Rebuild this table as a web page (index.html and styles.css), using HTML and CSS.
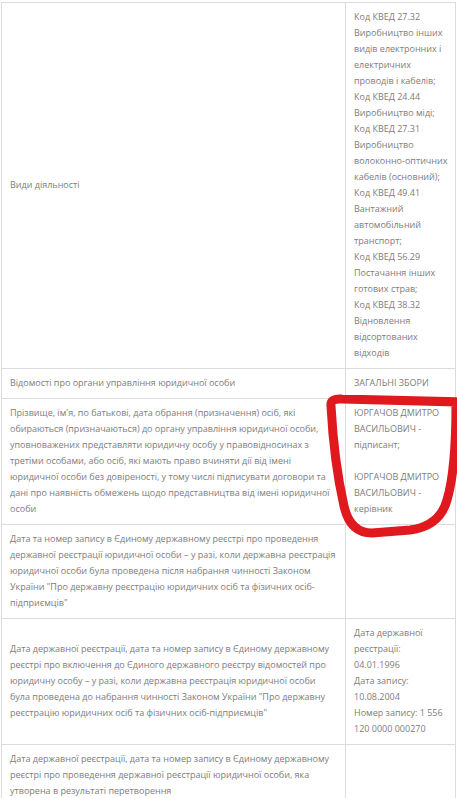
FILE: index.html
```html
<!DOCTYPE html>
<html lang="uk">
<head>
    <meta charset="UTF-8">
    <meta name="viewport" content="width=device-width, initial-scale=1.0">
    <title>Відомості про юридичну особу</title>
    <link rel="stylesheet" href="styles.css">
</head>
<body>
    <div class="page">
        <table class="info-table">
            <tr>
                <td class="label">Види діяльності</td>
                <td class="value">
                    Код КВЕД 27.32 Виробництво інших видів електронних і електричних проводів і кабелів;<br>
                    Код КВЕД 24.44 Виробництво міді;<br>
                    Код КВЕД 27.31 Виробництво волоконно-оптичних кабелів (основний);<br>
                    Код КВЕД 49.41 Вантажний автомобільний транспорт;<br>
                    Код КВЕД 56.29 Постачання інших готових страв;<br>
                    Код КВЕД 38.32 Відновлення відсортованих відходів
                </td>
            </tr>
            <tr>
                <td class="label">Відомості про органи управління юридичної особи</td>
                <td class="value">ЗАГАЛЬНІ ЗБОРИ</td>
            </tr>
            <tr>
                <td class="label">Прізвище, ім'я, по батькові, дата обрання (призначення) осіб, які обираються (призначаються) до органу управління юридичної особи, уповноважених представляти юридичну особу у правовідносинах з третіми особами, або осіб, які мають право вчиняти дії від імені юридичної особи без довіреності, у тому числі підписувати договори та дані про наявність обмежень щодо представництва від імені юридичної особи</td>
                <td class="value">
                    ЮРГАЧОВ ДМИТРО ВАСИЛЬОВИЧ - підписант;<br><br>
                    ЮРГАЧОВ ДМИТРО ВАСИЛЬОВИЧ - керівник
                </td>
            </tr>
            <tr>
                <td class="label">Дата та номер запису в Єдиному державному реєстрі про проведення державної реєстрації юридичної особи – у разі, коли державна реєстрація юридичної особи була проведена після набрання чинності Законом України "Про державну реєстрацію юридичних осіб та фізичних осіб-підприємців"</td>
                <td class="value"></td>
            </tr>
            <tr>
                <td class="label">Дата державної реєстрації, дата та номер запису в Єдиному державному реєстрі про включення до Єдиного державного реєстру відомостей про юридичну особу – у разі, коли державна реєстрація юридичної особи була проведена до набрання чинності Законом України "Про державну реєстрацію юридичних осіб та фізичних осіб-підприємців"</td>
                <td class="value">
                    Дата державної реєстрації:<br>04.01.1996<br>
                    Дата запису: 10.08.2004<br>
                    Номер запису: 1 556 120 0000 000270
                </td>
            </tr>
            <tr>
                <td class="label">Дата державної реєстрації, дата та номер запису в Єдиному державному реєстрі про проведення державної реєстрації юридичної особи, яка утворена в результаті перетворення</td>
                <td class="value"></td>
            </tr>
        </table>
    </div>

    <!-- red marker circle drawn over the signers cell -->
    <svg class="marker" width="457" height="798" viewBox="0 0 457 798">
        <path d="M 331 406 Q 330 398 342 399 L 462 402 M 456 404 Q 456 470 447 500 Q 440 526 410 530 L 372 533 Q 350 533 344 506 Q 334 462 331 406"
              fill="none" stroke="#e0191f" stroke-width="9" stroke-linecap="round" stroke-linejoin="round"/>
    </svg>
</body>
</html>
```

FILE: styles.css
```css
body {
    margin: 0;
    background-color: white;
    font-family: "Open Sans", Arial, sans-serif;
    font-size: 9px;
    color: #7d7d7d;
}
.page {
    padding: 2px 0 0 1px;
}
.info-table {
    width: 455px;
    border-collapse: collapse;
    border-bottom: 2px solid #5e5346;
}
.info-table td {
    border: 1px solid #dcdcdc;
    padding: 6px 8px 7px 8px;
    line-height: 16px;
    vertical-align: middle;
}
.info-table .label {
    width: 327px;
}
.info-table .value {
    width: 95px;
    padding-right: 6px;
}
.marker {
    position: absolute;
    top: 0;
    left: 0;
    pointer-events: none;
}
```
